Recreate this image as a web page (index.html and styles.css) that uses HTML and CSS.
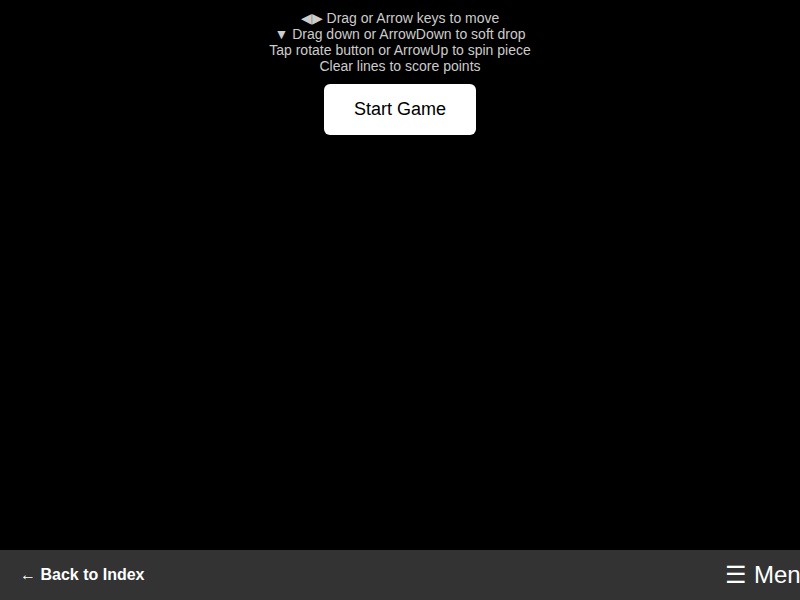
FILE: index.html
```html
<!DOCTYPE html>
<html lang="en">
<head>
<meta charset="utf-8">
<title>Game</title>
<link rel="stylesheet" href="styles.css">
</head>
<body>
<main class="stage">
  <div class="instructions">
    <div>◀▶ Drag or Arrow keys to move</div>
    <div>▼ Drag down or ArrowDown to soft drop</div>
    <div>Tap rotate button or ArrowUp to spin piece</div>
    <div>Clear lines to score points</div>
  </div>
  <button class="start">Start Game</button>
</main>
<nav class="bottombar">
  <a class="back" href="#"><span class="arrow">←</span> Back to Index</a>
  <span class="menu">☰ Menu</span>
</nav>
</body>
</html>
```
FILE: styles.css
```css
html, body {
  margin: 0;
  padding: 0;
  background: #000;
  height: 100%;
  overflow: hidden;
  font-family: "Liberation Sans", Arial, sans-serif;
}
.stage {
  display: flex;
  flex-direction: column;
  align-items: center;
  padding-top: 10px;
}
.instructions {
  color: #ccc;
  font-size: 14px;
  line-height: 16px;
  text-align: center;
}
.start {
  margin-top: 10px;
  width: 152px;
  padding: 15px 0;
  background: #fff;
  color: #000;
  border: none;
  border-radius: 6px;
  font-family: "Liberation Sans", Arial, sans-serif;
  font-size: 18px;
}
.bottombar {
  position: fixed;
  left: 0;
  bottom: 0;
  width: 100%;
  height: 50px;
  background: #333;
  display: flex;
  align-items: center;
  justify-content: space-between;
  padding-left: 20px;
  box-sizing: border-box;
  overflow: hidden;
}
.back {
  color: #fff;
  text-decoration: none;
  font-weight: bold;
  font-size: 16px;
}
.back .arrow {
  font-weight: normal;
}
.menu {
  color: #fff;
  font-size: 24px;
  white-space: nowrap;
  margin-right: -14px;
}
```
